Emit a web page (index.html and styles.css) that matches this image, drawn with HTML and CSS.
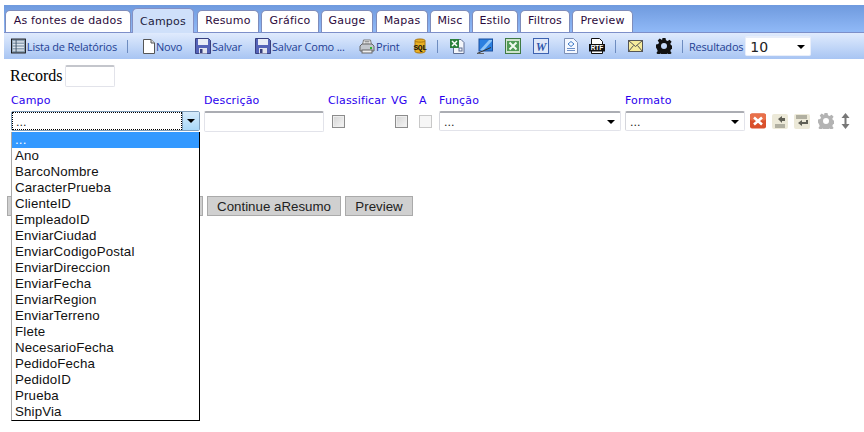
FILE: index.html
```html
<!DOCTYPE html>
<html lang="pt">
<head>
<meta charset="UTF-8" />
<title>Campos</title>
<link rel="stylesheet" href="styles.css">
</head>
<body>
<div class="tabband">
  <a class="tab t1">As fontes de dados</a>
  <a class="tab active t2">Campos</a>
  <a class="tab t3">Resumo</a>
  <a class="tab t4">Gráfico</a>
  <a class="tab t5">Gauge</a>
  <a class="tab t6">Mapas</a>
  <a class="tab t7">Misc</a>
  <a class="tab t8">Estilo</a>
  <a class="tab t9">Filtros</a>
  <a class="tab t10">Preview</a>
</div>

<div class="toolbar">
  <a class="tool w-list">
    <svg width="16" height="16" viewBox="0 0 16 16"><rect x=".5" y=".5" width="15" height="15" fill="#8fa3b5" stroke="#111"/><path d="M2 3.500h12M2 6.500h12M2 9.500h12M2 12.500h12" stroke="#dfe6ee" stroke-width="1.400"/><path d="M5.500 1v14" stroke="#44566a"/></svg>
    <span>Lista de Relatórios</span>
  </a>
  <i class="sep s1"></i>
  <a class="tool w-novo">
    <svg width="12" height="15" viewBox="0 0 12 15"><path d="M.5.500h7.500l3.500 3.500v10.500h-11z" fill="#fff" stroke="#555"/><path d="M8 .5v3.500h3.500" fill="#ddd" stroke="#555"/></svg>
    <span>Novo</span>
  </a>
  <a class="tool w-salvar">
    <svg width="16" height="16" viewBox="0 0 16 16"><use href="#disk"/></svg>
    <span>Salvar</span>
  </a>
  <a class="tool w-como">
    <svg width="16" height="16" viewBox="0 0 16 16"><use href="#disk"/></svg>
    <span>Salvar Como ...</span>
  </a>
  <a class="tool w-print">
    <svg width="16" height="15" viewBox="0 0 16 15"><path d="M4.500 1h7l1 5h-9z" fill="#fff" stroke="#777"/><path d="M5.500 2.500h5M5.500 4h5" stroke="#999"/><path d="M1 7l2-2h10l2 2v5h-14z" fill="#c3c7cc" stroke="#666"/><rect x="3" y="11" width="10" height="3" fill="#eee" stroke="#666"/><rect x="11" y="8" width="2" height="2" fill="#2fb52f"/></svg>
    <span>Print</span>
  </a>
  <svg class="ic-sql" width="16" height="16" viewBox="0 0 16 16"><path d="M3 2.500c0-2 10-2 10 0v11c0 2-10 2-10 0z" fill="#e9b022" stroke="#a8740d"/><path d="M3 3c1 1.500 9 1.500 10 0" fill="none" stroke="#a8740d"/><text x="8" y="11.500" class="sql-txt">SQL</text></svg>
  <i class="sep s2"></i>
  <svg class="ic ic-xls" width="16" height="16" viewBox="0 0 16 16"><path d="M4.500 1.500h7.500l3 3v11h-10.500z" fill="#f4f6fa" stroke="#5d6d92"/><rect x="1" y="1" width="9" height="9" fill="#2b7f3c"/><path d="M3 3l5 5M8 3l-5 5" stroke="#fff" stroke-width="1.500"/><rect x="10" y="10" width="3" height="3" fill="none" stroke="#5d6d92"/></svg>
  <svg class="ic ic-pub" width="16" height="16" viewBox="0 0 16 16"><rect x="2" y="1" width="13.500" height="12" fill="#2b80e0" stroke="#1b4f9e"/><path d="M3 12l9-10h3v1l-9 10z" fill="#8ec5f7"/><path d="M0 15.500l14-6" stroke="#333"/><path d="M1 15.500h6" stroke="#666"/></svg>
  <svg class="ic ic-excel" width="16" height="16" viewBox="0 0 16 16"><rect x=".5" y=".5" width="15" height="15" fill="#cfe3cd" stroke="#3f7a44"/><rect x="2" y="3" width="12" height="10" fill="#4f9a55"/><path d="M4.500 4.500l7 7M11.500 4.500l-7 7" stroke="#f2fbf0" stroke-width="2"/></svg>
  <svg class="ic ic-word" width="16" height="16" viewBox="0 0 16 16"><rect x=".5" y=".5" width="15" height="15" fill="#dfe8f8" stroke="#3d62b0"/><text x="8" y="12.500" class="word-txt">W</text></svg>
  <svg class="ic-doc" width="14" height="16" viewBox="0 0 14 16"><path d="M.5.500h9l4 4v11h-13z" fill="#f4f8ff" stroke="#7c8fb5"/><path d="M7 3.500l3 2.500-3 2.500-3-2.500z" fill="none" stroke="#3d7ac7"/><path d="M3 10.500h8M3 12.500h8" stroke="#6d8fc7"/></svg>
  <svg class="ic-rtf" width="16" height="16" viewBox="0 0 16 16"><path d="M2.500 .5h8l3 3v12h-11z" fill="#fff" stroke="#111"/><rect x="0" y="6" width="16" height="7.500" fill="#111"/><text x="8" y="12.300" class="rtf-txt">RTF</text></svg>
  <i class="sep s3"></i>
  <svg class="ic-mail" width="15" height="12" viewBox="0 0 15 12"><rect x=".5" y=".5" width="14" height="11" fill="#f6eb9c" stroke="#555"/><path d="M.5 .5l7 6 7-6M.5 11.500l5-6M14.500 11.500l-5-6" fill="none" stroke="#555"/></svg>
  <svg class="ic-gear" width="16" height="16" viewBox="0 0 16 16"><use href="#gear" fill="#111"/></svg>
  <i class="sep s4"></i>
  <span class="tool-label">Resultados</span>
  <div class="selectbox results">
    <select><option>10</option></select>
  </div>
</div>

<svg class="defs" width="0" height="0">
  <defs>
    <g id="disk"><path d="M.5.500h13l2 2v13h-15z" fill="#5563b8" stroke="#39407f"/><rect x="3" y="1" width="10" height="6" fill="#e8ecf6"/><rect x="4" y="10" width="8" height="5.500" fill="#e2e4ee"/><rect x="5" y="11" width="2.500" height="4" fill="#39407f"/></g>
    <path id="gear" d="M6.500 0h3l.5 2.300 1.600.7 2-1.300 2 2-1.300 2 .7 1.600 2.300.5v3l-2.300.5-.7 1.600 1.300 2-2 2-2-1.300-1.600.7-.5 2.300h-3l-.5-2.300-1.600-.7-2 1.300-2-2 1.300-2-.7-1.600L0 9.500v-3l2.300-.5.7-1.600-1.300-2 2-2 2 1.300L6 2.300zM8 5a3 3 0 1 0 0 6 3 3 0 0 0 0-6z" fill-rule="evenodd"/>
  </defs>
</svg>

<div class="content">
  <div class="records">
    <label>Records</label>
    <input type="text" class="textbox rec-input">
  </div>

  <div class="fields">
    <span class="lbl">Campo</span>
    <span class="lbl">Descrição</span>
    <span class="lbl">Classificar</span>
    <span class="lbl">VG</span>
    <span class="lbl">A</span>
    <span class="lbl">Função</span>
    <span class="lbl">Formato</span>
    <span></span>

    <div class="campo-cell">
      <div class="campo">
        <span class="campo-text">...</span>
        <span class="campo-btn"></span>
      </div>
      <ul class="droplist">
        <li class="sel">...</li>
        <li>Ano</li>
        <li>BarcoNombre</li>
        <li>CaracterPrueba</li>
        <li>ClienteID</li>
        <li>EmpleadoID</li>
        <li>EnviarCiudad</li>
        <li>EnviarCodigoPostal</li>
        <li>EnviarDireccion</li>
        <li>EnviarFecha</li>
        <li>EnviarRegion</li>
        <li>EnviarTerreno</li>
        <li>Flete</li>
        <li>NecesarioFecha</li>
        <li>PedidoFecha</li>
        <li>PedidoID</li>
        <li>Prueba</li>
        <li>ShipVia</li>
      </ul>
    </div>
    <input type="text" class="textbox desc">
    <div class="chk-cell"><input type="checkbox" class="chk"></div>
    <div class="chk-cell"><input type="checkbox" class="chk"></div>
    <div class="chk-cell a-cell"><input type="checkbox" class="chk off"></div>
    <div class="selectbox funcao"><select><option>...</option></select></div>
    <div class="selectbox formato"><select><option>...</option></select></div>
    <div class="row-icons">
      <svg class="ri-x" width="16" height="16" viewBox="0 0 16 16"><rect width="16" height="15" y=".5" rx="2" fill="#d9502c"/><rect width="16" height="7" y=".5" rx="2" fill="#e8704a"/><path d="M4 4.500l8 7M12 4.500l-8 7" stroke="#fff" stroke-width="2.600"/></svg>
      <svg width="16" height="15" viewBox="0 0 16 15"><rect width="16" height="15" rx="2" fill="#ece9d8"/><path d="M3 11h10M3 13h10" stroke="#77776a"/><path d="M6 5l4-3v2h3v3h-3v2z" fill="#5f5f55"/></svg>
      <svg width="16" height="15" viewBox="0 0 16 15"><rect width="16" height="15" rx="2" fill="#ece9d8"/><path d="M2 2h11M2 4h11" stroke="#77776a"/><path d="M14 6v4h-6v2l-4-3 4-3v2h4v-2z" fill="#5f5f55"/></svg>
      <svg class="ri-gear" width="16" height="16" viewBox="0 0 16 16"><use href="#gear" fill="#b3b3b3"/></svg>
      <svg class="ri-move" width="9" height="16" viewBox="0 0 9 16"><path d="M4.500 0l4 5h-3v6h3l-4 5-4-5h3v-6h-3z" fill="#777"/></svg>
    </div>
  </div>

  <div class="actions">
    <button class="btn back"></button>
    <button class="btn">Continue aResumo</button>
    <button class="btn">Preview</button>
  </div>
</div>
</body>
</html>
```

FILE: styles.css
```css
body {
  margin: 0;
  background: #fff;
  color: #000;
  font-family: 'Liberation Sans', Arial, sans-serif;
  min-height: 432px;
}
.defs { position: absolute; }

/* tabs */
.tabband {
  display: flex;
  align-items: flex-end;
  height: 27px;
  margin: 5px 0 0 4px;
  padding-left: 1px;
  background: linear-gradient(#6f9ade, #90b9f7);
  border-bottom: 1px solid #7d8fc9;
  font-family: 'DejaVu Sans', Verdana, sans-serif;
  font-size: 11px;
  letter-spacing: .2px;
}
.tab {
  box-sizing: border-box;
  height: 22px;
  line-height: 20px;
  text-align: center;
  background: #fff;
  color: #2c0a3c;
  border: 1px solid #7f8dbb;
  border-bottom: 0;
  border-radius: 5px 5px 0 0;
  margin-right: 2px;
}
.tab.active {
  height: 25px;
  line-height: 26px;
  margin-bottom: -1px;
  background: #cfe0fa;
  border-color: #8490c4;
  color: #1d1d3d;
}
.t1 { width: 126px; margin-right: 1px; }
.t2 { width: 62px; margin-right: 3px; }
.t3 { width: 62px; }
.t4 { width: 58px; margin-right: 2px; }
.t5 { width: 52px; margin-right: 3px; }
.t6 { width: 52px; }
.t7 { width: 40px; }
.t8 { width: 46px; }
.t9 { width: 50px; }
.t10 { width: 61px; }

/* toolbar */
.toolbar {
  display: flex;
  align-items: center;
  height: 26px;
  margin-left: 4px;
  padding-left: 7px;
  background: linear-gradient(#e0ebfd, #a8c5f3);
  font-family: 'Open Sans', Tahoma, sans-serif;
  font-size: 11px;
  color: #1f3f94;
}
.tool { display: flex; align-items: center; gap: 1px; }
.tool span { white-space: nowrap; letter-spacing: -.2px; }
.sep {
  display: block;
  width: 1px;
  height: 13px;
  background: #6d8cc0;
}
.w-list { width: 106px; }
.s1 { margin: 0 15px 0 10px; }
.w-novo { width: 52px; }
.w-salvar { width: 60px; }
.w-como { width: 104px; }
.w-print { width: 53px; }
.ic-sql { margin-right: 9px; }
.s2 { margin-right: 11px; }
.ic { margin-right: 12px; }
.ic-word { margin-right: 15px; }
.ic-doc { margin-right: 11px; }
.ic-rtf { margin-right: 10px; }
.s3 { margin-right: 12px; }
.ic-mail { margin-right: 13px; }
.ic-gear { margin-right: 10px; }
.s4 { margin-right: 6px; }
.tool-label { margin-right: 2px; letter-spacing: -.2px; white-space: nowrap; }
.sql-txt, .word-txt, .rtf-txt { text-anchor: middle; font-weight: bold; }
.sql-txt { font: bold 8px 'Liberation Mono', monospace; fill: #111; letter-spacing: -.5px; }
.word-txt { font: italic bold 12px 'Liberation Serif', serif; fill: #2f58ac; }
.rtf-txt { font: bold 6.500px 'Liberation Sans', sans-serif; fill: #fff; }

/* selects, all the same square look */
.selectbox {
  position: relative;
  box-sizing: border-box;
  height: 20px;
  background: #fff;
  border: 1px solid #e2e3ea;
  border-top: 2px solid #abadb3;
  border-left-color: #d5d6dc;
  border-radius: 2px;
}
.selectbox::after {
  content: "";
  position: absolute;
  right: 5px;
  top: 7px;
  border: 4px solid transparent;
  border-top: 4px solid #000;
}
.selectbox select {
  appearance: none;
  display: block;
  width: 100%;
  height: 18px;
  padding: 0 4px;
  border: 0;
  background: none;
  font: 11px 'DejaVu Sans', Verdana, sans-serif;
  color: #222;
}
.results { width: 66px; border-color: #e8eefa; }
.results::after { right: 5px; }
.results select { font: 14px 'DejaVu Sans', Verdana, sans-serif; padding: 0 4px; }
.funcao { width: 182px; }
.formato { width: 120px; }

/* form */
.content { padding: 6px 0 0 10px; }
.records {
  display: flex;
  align-items: center;
  gap: 4px;
  height: 22px;
  font: 16px 'Liberation Serif', 'Times New Roman', serif;
}
.textbox {
  box-sizing: border-box;
  background: #fff;
  border: 1px solid #e2e3ea;
  border-top: 2px solid #c4c6cc;
  border-radius: 2px;
  padding: 0;
}
.rec-input { width: 50px; height: 22px; margin-left: -1px; }
.fields {
  display: grid;
  grid-template-columns: 193px 124px 63px 28px 20px 186px 125px auto;
  grid-template-rows: 16px 20px;
  row-gap: 2px;
  margin: 6px 0 0 1px;
  font: 11px 'DejaVu Sans', Verdana, sans-serif;
}
.lbl { color: #2a00ee; line-height: 16px; letter-spacing: .15px; white-space: nowrap; }
.desc { width: 120px; height: 21px; border-top-color: #abadb3; }
.chk-cell { padding: 4px 0 0 4px; }
.a-cell { padding-left: 0; }
.chk {
  appearance: none;
  display: block;
  box-sizing: border-box;
  width: 13px;
  height: 13px;
  margin: 0;
  background: linear-gradient(135deg, #d4d4d4, #f6f6f6);
  border: 1px solid #8c8c8c;
  box-shadow: inset 0 0 0 1px #eee;
}
.chk.off { background: #f6f6f6; border-color: #c8c8c8; box-shadow: none; }
.campo-cell { position: relative; }
.campo {
  box-sizing: border-box;
  display: flex;
  width: 189px;
  height: 20px;
  background: #fff;
  border: 1px solid #7f9db9;
  border-radius: 2px;
}
.campo-text {
  flex: 1;
  border: 1px dotted #000;
  padding-left: 3px;
  line-height: 19px;
  color: #222;
}
.campo-btn {
  position: relative;
  width: 16px;
  background: linear-gradient(#d6ebfb, #a9d8f8);
  border-left: 1px solid #7f9db9;
}
.campo-btn::after {
  content: "";
  position: absolute;
  left: 4px;
  top: 7px;
  border: 4px solid transparent;
  border-top-color: #000;
}
.droplist {
  position: absolute;
  z-index: 2;
  top: 21px;
  left: 0;
  box-sizing: border-box;
  width: 189px;
  height: 289px;
  margin: 0;
  padding: 0;
  list-style: none;
  background: #fff;
  border: 1px solid #000;
  border-left-color: #a8a8a8;
  border-top: 0;
  font: 13.300px 'Liberation Sans', Arial, sans-serif;
  letter-spacing: .15px;
}
.droplist li { height: 16px; line-height: 16px; padding-left: 3px; color: #111; white-space: nowrap; }
.droplist li.sel { background: #3399ff; color: #fff; }
.row-icons { display: flex; align-items: center; gap: 6px; height: 20px; }
.ri-gear { margin-left: 2px; }
.ri-move { margin-left: 1px; }

.actions { display: flex; gap: 4px; margin: 65px 0 0 -3px; }
.btn {
  box-sizing: border-box;
  height: 20px;
  padding: 0;
  background: #d0d0d0;
  border: 1px solid #aaa;
  font: 13.300px 'Liberation Sans', Arial, sans-serif;
  color: #222;
  width: 134px;
}
.btn:last-child { width: 68px; }
.btn.back { width: 196px; }
```
